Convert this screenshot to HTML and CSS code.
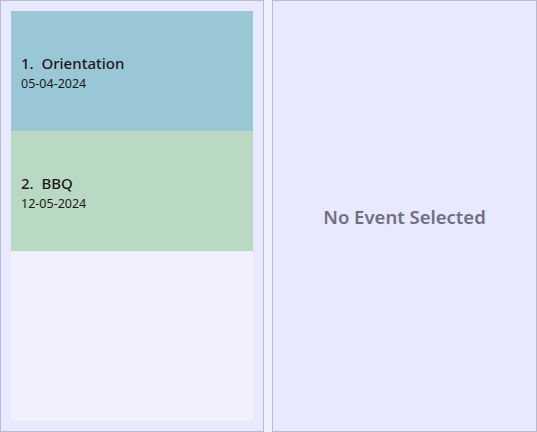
FILE: index.html
```html
<!DOCTYPE html>
<html>
<head>
<meta charset="utf-8">
<link rel="stylesheet" href="styles.css">
</head>
<body>
<div class="app">
  <div class="panel left">
    <div class="list">
      <div class="item blue">
        <div class="title">1.  Orientation</div>
        <div class="date">05-04-2024</div>
      </div>
      <div class="item green">
        <div class="title">2.  BBQ</div>
        <div class="date">12-05-2024</div>
      </div>
    </div>
  </div>
  <div class="panel right">
    <div class="empty">No Event Selected</div>
  </div>
</div>
</body>
</html>
```
FILE: styles.css
```css
html, body {
  margin: 0;
  padding: 0;
  background: #f0f0ff;
  font-family: "Noto Sans", "Open Sans", sans-serif;
}
.app {
  display: flex;
  gap: 8px;
  height: 432px;
  width: 537px;
}
.panel {
  box-sizing: border-box;
  height: 432px;
  border: 1px solid #b9b9cf;
  background: #e8e8ff;
}
.left {
  width: 264px;
  padding: 10px;
}
.right {
  flex: 1;
  display: flex;
  align-items: center;
  justify-content: center;
}
.list {
  background: #f0f0ff;
  height: 410px;
}
.item {
  height: 120px;
  display: flex;
  flex-direction: column;
  justify-content: center;
  padding-left: 10px;
  color: #1a1a1a;
}
.blue { background: #9ac7d6; }
.green { background: #bad9c2; }
.title {
  font-size: 15px;
  font-weight: 500;
  line-height: 20px;
  white-space: pre;
  margin-top: 2px;
}
.date {
  font-size: 12.5px;
  line-height: 16px;
  margin-top: 3px;
}
.empty {
  font-size: 18.5px;
  font-weight: 600;
  color: #70707f;
}
```
